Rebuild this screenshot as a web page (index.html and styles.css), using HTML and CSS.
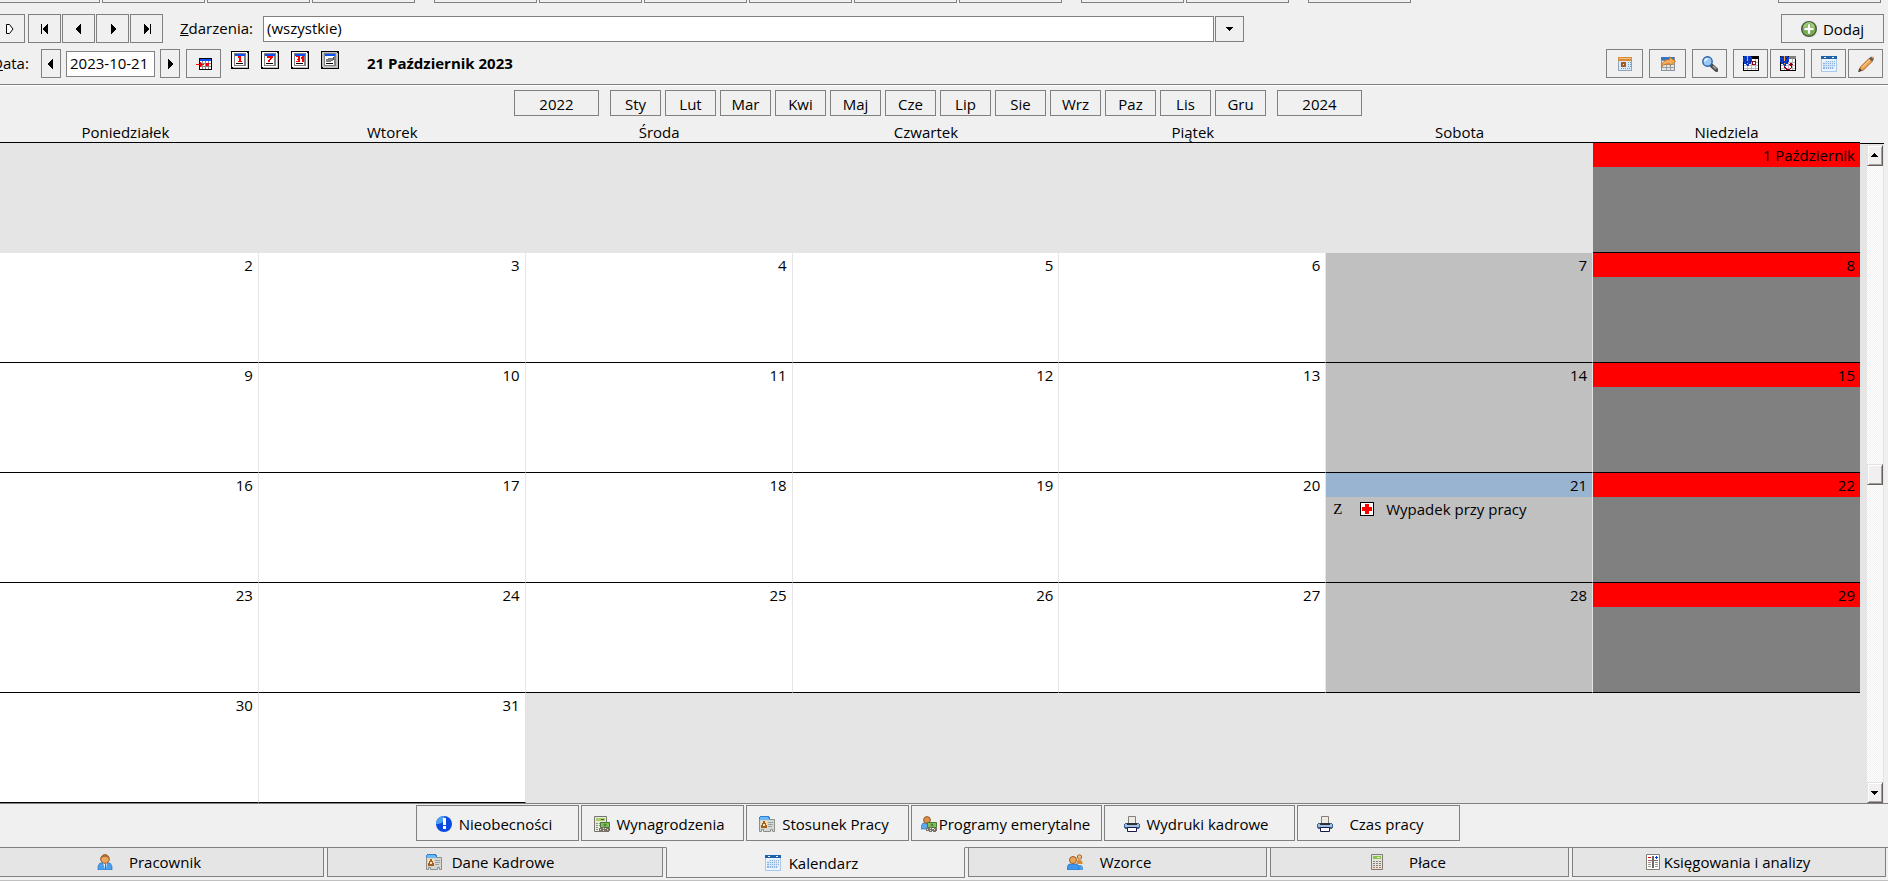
FILE: index.html
```
<!doctype html>
<html lang="pl">

<head>
  <meta charset="UTF-8">
  <meta name="viewport" content="width=device-width, initial-scale=1">
  <title>Kalendarz</title>
  <link rel="stylesheet" href="styles.css">
</head>

<body>
  <svg class="sprite" aria-hidden="true">
    <symbol id="left" viewBox="0 0 16 16"><path d="M10 3v10h-1v-1h-1v-1h-1v-1h-1v-1h-1v-2h1v-1h1v-1h1v-1h1v-1z" /></symbol>
    <symbol id="right" viewBox="0 0 16 16"><path d="M6 3v10h1v-1h1v-1h1v-1h1v-1h1v-2h-1v-1h-1v-1h-1v-1h-1v-1z" /></symbol>
    <symbol id="first" viewBox="0 0 16 16"><path d="M4 3h1v10h-1zM11 3v10h-1v-1h-1v-1h-1v-1h-1v-1h-1v-2h1v-1h1v-1h1v-1h1v-1z" /></symbol>
    <symbol id="last" viewBox="0 0 16 16"><path d="M11 3h1v10h-1zM5 3v10h1v-1h1v-1h1v-1h1v-1h1v-2h-1v-1h-1v-1h-1v-1h-1v-1z" /></symbol>
    <symbol id="run" viewBox="0 0 16 16"><path d="M5.500 3.500h3l3.500 4.500-3.500 4.500h-3z" fill="#fff" stroke="#000" /></symbol>
    <symbol id="down" viewBox="0 0 16 16"><path d="M4 6h7v1h-1v1h-1v1h-1v1h-1v-1h-1v-1h-1v-1h-1z" /></symbol>
    <symbol id="up" viewBox="0 0 16 16"><path d="M4 9h7v-1h-1v-1h-1v-1h-1v-1h-1v1h-1v1h-1v1h-1z" /></symbol>

    <symbol id="today" viewBox="0 0 16 16">
      <path d="M3 2h13v12H3z" />
      <path d="M4 3h11v2H4z" fill="#0a50f0" />
      <path d="M4 5h11v8H4z" fill="#fff" />
      <path d="M6 5h1v8H6zM9 5h1v8H9zM12 5h1v8h-1zM4 7h11v1H4zM4 10h11v1H4z" fill="#888" />
      <path d="M0 8h4V6h1v1h1v1h2v1H6v1H5v1H4V9H0zM10 7h3v3h-3z" fill="#f00" />
    </symbol>
    <symbol id="page" viewBox="0 0 18 18">
      <path d="M0 0h18v18H0z" />
      <path d="M1 1h15v15H1z" fill="#fff" />
      <path d="M16 2v14H2v1h15V2z" fill="#c0c0c0" />
      <path d="M3 2h12v13H3z" fill="#808080" />
      <path d="M4 5h9v9H4z" fill="#fff" />
      <path d="M4 3h10v2H4z" fill="#0a50f0" />
      <path d="M5 12h7v1H5z" />
    </symbol>
    <symbol id="day" viewBox="0 0 18 18"><use href="#page" /><path d="M7 5h3v5h1v1H7v-1h1V7H7z" fill="#f00" /></symbol>
    <symbol id="week" viewBox="0 0 18 18"><use href="#page" /><path d="M6 5h6v2h-1v1h-1v1H9v2H7V9h1V8h1V7H6z" fill="#f00" /></symbol>
    <symbol id="month" viewBox="0 0 18 18"><use href="#page" /><path d="M5 5h4v6H5v-1h2V9H6V8h1V6H5zM10 6h1V5h2v6h-2V8h-1z" fill="#f00" /></symbol>
    <symbol id="schedule" viewBox="0 0 18 18">
      <use href="#page" />
      <path d="M1 1h2v15H1zM3 1h13v1H3zM15 2h1v14H3v-1h12z" fill="#c0c0c0" />
      <path d="M7 7h5v3h-2v1H5V8h2z" fill="#808080" /><path d="M12 6h1v3h-1z" fill="#f00" />
    </symbol>

    <symbol id="plus" viewBox="0 0 16 16">
      <circle cx="8" cy="8" r="7.300" fill="#74b04a" stroke="#4a5548" stroke-width="1.400" />
      <path d="M2 7a6 6 0 0 1 12 0z" fill="#9ccb72" />
      <path d="M6.500 3h3v3.500H13v3H9.500V13h-3V9.500H3v-3h3.500z" fill="#fff" stroke="#5c8d38" stroke-width=".5" />
    </symbol>
    <symbol id="agenda" viewBox="0 0 16 16">
      <path d="M1 1h14v14H1z" fill="#d9eaf8" />
      <path d="M1 1h14v4H1z" fill="#d98b3c" />
      <path d="M2 2h12v1H2z" fill="#f4c184" />
      <path d="M1.500 5v9.500h13V5" fill="none" stroke="#8ea4b8" />
      <path d="M4 6h5v5H4z" fill="#a65a1c" /><path d="M6 8h1v1H6z" fill="#fff" />
      <path d="M11 6h1v1h-1zM13 6h1v1h-1zM11 8h1v1h-1zM13 8h1v1h-1zM11 10h1v1h-1zM13 10h1v1h-1zM4 12h1v1H4zM6 12h1v1H6zM8 12h1v1H8zM10 12h1v1h-1zM12 12h1v1h-1z" fill="#7a9ab8" />
    </symbol>
    <symbol id="export" viewBox="0 0 16 16">
      <path d="M1 1h14v14H1z" fill="#8c9298" />
      <path d="M1 1h13v3H1z" fill="#3278c8" />
      <path d="M2 5h12v9H2z" fill="#e4e6e8" />
      <path d="M2 8h12v1H2zM2 11h12v1H2zM6 5h1v9H6zM10 5h1v9h-1z" fill="#9a9da0" />
      <path d="M1.500 11C2 6 5 3.500 9.500 3.500V.8l6 4.700-5.500 4V7.800C6 7.500 4 8.500 1.500 11z" fill="#f5ad55" stroke="#b8681c" stroke-width=".8" />
    </symbol>
    <symbol id="search" viewBox="0 0 16 16">
      <path d="M9.500 9.500l5 4.500" stroke="#4e4e4e" stroke-width="4" stroke-linecap="round" />
      <path d="M11 10l3 3" stroke="#a8a8a8" stroke-width="1.500" />
      <circle cx="5.500" cy="5.500" r="4.700" fill="#9cc9f4" stroke="#2a62b0" stroke-width="1.400" />
      <path d="M2.500 6a3 3 0 0 1 4-3.500z" fill="#fff" />
    </symbol>
    <symbol id="gridbase" viewBox="0 0 16 16">
      <path d="M0 0h16v15H0z" />
      <path d="M1 3h14v11H1z" fill="#fff" />
      <path d="M4 3h1v11H4zM8 3h1v11H8zM12 3h1v11h-1zM1 6h14v1H1zM1 9h14v1H1zM1 12h14v1H1z" fill="#bbb" />
      <path d="M1 0h7v1h1v5H8v2H6v2H4V9H3V8H1V6H0V1h1z" fill="#0a3cc8" />
      <path d="M2 1h1v1H2zM6 2h1v1H6zM1 4h1v1H1zM7 5h1v1H7zM3 6h1v1H3z" fill="#001a70" />
      <path d="M4 0h1v5H4zM4 7h1v1H4z" fill="#ffa83c" />
    </symbol>
    <symbol id="gridone" viewBox="0 0 16 16"><use href="#gridbase" /><path d="M9.500 5.500h3v3h-3z" fill="#fff" stroke="#a00010" /></symbol>
    <symbol id="gridcycle" viewBox="0 0 16 16"><use href="#gridbase" /><path d="M9 0h7v3H9z" fill="#808080" /><path d="M4 10h1v1h1v1h1v1h3v-1h1v-2h-1V9H9V8h1V7h2v1h1v1h-1v3h-1v1h-1v1H6v-1H5v-1H4z" fill="#90001c" /></symbol>
    <symbol id="calendar" viewBox="0 0 16 16">
      <path d="M0 0h16v16H0z" fill="#a9c8ea" />
      <path d="M1 3h14v12H1z" fill="#eaf5fd" />
      <path d="M0 0h16v3H0z" fill="#1c62ac" /><path d="M3 1h2v1H3zM11 1h2v1h-2z" fill="#fff" />
      <path d="M5 5h9v5h-2v3H2V7h3z" fill="#8db2e0" />
      <path d="M4 5h1v8H4zM6 5h1v8H6zM8 5h1v8H8zM10 5h1v8h-1zM12 5h1v8h-1zM2 6h12v1H2zM2 8h12v1H2zM2 10h12v1H2z" fill="#d5e6f7" />
    </symbol>
    <symbol id="pencil" viewBox="0 0 16 16">
      <path d="M1 15.500L2.500 11 11.500 2l3 3L5.500 14z" fill="#f0a550" stroke="#a8662a" />
      <path d="M4 11.500l8-8" stroke="#ffd79a" />
      <path d="M11 2.500l2-2 3 3-2 2z" fill="#5a5f60" /><path d="M13 .5l3 3 0-2.500z" fill="#f49030" />
      <path d="M0 16l1.500-4 2.500 2.500z" fill="#444" />
    </symbol>

    <symbol id="alert" viewBox="0 0 16 16">
      <circle cx="8" cy="8" r="8" fill="#0c49e2" />
      <path d="M0 8a8 8 0 0 1 8-8c2 3-2 9-8 8z" fill="#4da0f2" />
      <path d="M7 2h3v7H7zM7 10h3v3H7z" fill="#fff" />
    </symbol>
    <symbol id="cash" viewBox="0 0 16 16">
      <path d="M6.500 6.500h9v5h-9z" fill="#84bd60" stroke="#477a32" />
      <circle cx="11" cy="9" r="1.500" fill="#4e8539" />
      <path d="M5 12h3v-1h3v2h2v-1h3v3h-1v1h-3v-1h-1v1H8v-1H5z" fill="#77716a" />
      <path d="M6 13h1v1H6zM9 12h1v1H9zM9 14h1v1H9zM13 13h1v1h-1z" fill="#e8e4de" />
    </symbol>
    <symbol id="wages" viewBox="0 0 16 16">
      <path d="M.5.500h12v15H.5z" fill="#eceae0" stroke="#74776c" />
      <path d="M2 2h9v3H2z" fill="#a8cc70" /><path d="M7 3h3v1H7z" fill="#44672c" />
      <path d="M2 7h2v1H2zM5 7h2v1H5zM2 9h2v1H2zM5 9h2v1H5zM2 11h2v1H2zM2 13h2v1H2z" fill="#8c8f86" />
      <use href="#cash" />
    </symbol>
    <symbol id="badge" viewBox="0 0 16 16">
      <path d="M0 1h1V0h9v1h1v4H0z" fill="#2a80d8" /><path d="M1 1h8v1h1v2H1z" fill="#6fb8f6" />
      <path d="M.5 3.500h15v12h-2v-2h-2v2h-7v-2h-2v2h-2z" fill="#d5d7d4" stroke="#8b8f8c" />
      <path d="M1 3h9v1H1z" fill="#6fb8f6" />
      <path d="M2 5h6v7H2z" fill="#f8dfb4" />
      <path d="M4 5h2v2h1v2h1v3H2V9h1V7h1z" fill="#a4601c" /><path d="M4 8h2v2H4z" fill="#f8dfb4" />
      <path d="M9 6h5v1H9zM9 8h5v1H9zM9 10h4v1H9z" fill="#9da19d" />
    </symbol>
    <symbol id="person" viewBox="0 0 16 16">
      <path d="M1 16v-4l2-3h10l2 3v4z" fill="#4aa0ee" stroke="#1d68b4" stroke-width=".6" />
      <path d="M6 9h4l-1 6H8z" fill="#e8f2fb" /><path d="M8 10h1v5H8z" fill="#666" />
      <circle cx="8" cy="5" r="4.300" fill="#e9a860" stroke="#93572a" />
      <path d="M4 5c0-6 8-6 8 0-2-3-6-3-8 0z" fill="#a86e36" />
    </symbol>
    <symbol id="pension" viewBox="0 0 16 16">
      <path d="M0 13v-3l2-3h7v6z" fill="#5aaaf0" stroke="#1d68b4" stroke-width=".6" />
      <circle cx="6" cy="4" r="3.400" fill="#d8934e" stroke="#96582a" /><use href="#cash" />
    </symbol>
    <symbol id="people" viewBox="0 0 16 16">
      <circle cx="12.500" cy="3" r="2.200" fill="#f0bf80" stroke="#a6662c" /><path d="M10 10V7l1-1h3l1.500 2v2z" fill="#d88c34" />
      <path d="M9 16v-3l1-2h4l2 2v3z" fill="#4f9fe8" />
      <path d="M0 16v-3l2-3h8l2 3v3z" fill="#3f97ec" stroke="#1d68b4" stroke-width=".6" />
      <circle cx="6" cy="6" r="3.500" fill="#eda555" stroke="#9c5c25" />
    </symbol>
    <symbol id="printer" viewBox="0 0 16 16">
      <path d="M4.500.500h7v7h-7z" fill="#eceae2" stroke="#838078" />
      <path d="M1 7h14v1h1v4h-1v1H1v-1H0V8h1z" fill="#39628f" />
      <path d="M1 8h14v3H1z" fill="#9dbfe4" /><path d="M3 7h10v2H3z" fill="#303238" />
      <path d="M3.500 11.500h9v4h-9z" fill="#fff" stroke="#1a184a" />
    </symbol>
    <symbol id="calc" viewBox="0 0 16 16">
      <path d="M2.500.500h11v15h-11z" fill="#e6e4de" stroke="#7f7b73" />
      <path d="M4 2h8v3H4z" fill="#8bc24c" /><path d="M8 3h3v1H8z" fill="#dff0c0" />
      <path d="M4 7h2v1H4zM7 7h2v1H7zM10 7h2v1h-2zM4 9h2v1H4zM7 9h2v1H7zM10 9h2v1h-2zM4 11h2v1H4zM7 11h2v1H7zM10 11h2v1h-2z" fill="#85827c" />
      <path d="M4 13h2v1H4zM7 13h2v1H7zM10 13h2v1h-2z" fill="#c8743c" />
    </symbol>
    <symbol id="ledger" viewBox="0 0 16 16">
      <path d="M1.500.500h13v15h-13z" fill="#fff" stroke="#847d76" />
      <path d="M7 2h2v12H7z" fill="#6c6661" /><path d="M3 6h10v1H3z" fill="#8a6a62" />
      <path d="M3 8h3v1H3zM10 8h3v1h-3zM3 10h3v1H3zM10 10h3v1h-3zM3 12h3v1H3zM10 12h3v1h-3z" fill="#9a9a92" />
      <path d="M3 3h3v1H3z" fill="#e00000" /><path d="M11 2h1v1h1v1h-1v1h-1V4h-1V3h1z" fill="#0038e0" />
    </symbol>
    <symbol id="cross" viewBox="0 0 14 14"><path d="M0 0h14v14H0z" /><path d="M1 1h12v12H1z" fill="#fff" /><path d="M5 2h4v3h3v4H9v3H5V9H2V5h3z" fill="#f00" /></symbol>
  </svg>

  <div class="strip" aria-hidden="true">
    <span class="stub"></span><span class="stub"></span><span class="stub"></span><span class="stub"></span>
    <span class="stub stub-gap"></span><span class="stub"></span><span class="stub"></span><span class="stub"></span><span class="stub"></span><span class="stub"></span>
    <span class="stub stub-gap"></span><span class="stub"></span>
    <span class="stub stub-gap"></span>
    <span class="stub stub-end"></span>
  </div>

  <header class="toolbar">
    <div class="bar events">
      <div class="nav">
        <button class="btn nav-btn" aria-label="Uruchom"><svg class="icon"><use href="#run" /></svg></button>
        <button class="btn nav-btn" aria-label="Pierwszy"><svg class="icon crisp"><use href="#first" /></svg></button>
        <button class="btn nav-btn" aria-label="Poprzedni"><svg class="icon crisp"><use href="#left" /></svg></button>
        <button class="btn nav-btn" aria-label="Następny"><svg class="icon crisp"><use href="#right" /></svg></button>
        <button class="btn nav-btn" aria-label="Ostatni"><svg class="icon crisp"><use href="#last" /></svg></button>
      </div>
      <label class="events-label" for="events"><u>Z</u>darzenia:</label>
      <select class="field events-select" id="events">
        <option>(wszystkie)</option>
      </select>
      <span class="btn drop"><svg class="icon crisp"><use href="#down" /></svg></span>
      <button class="btn add"><svg class="icon"><use href="#plus" /></svg>Dodaj</button>
    </div>

    <div class="bar dates">
      <label class="date-label" for="date"><u>D</u>ata:</label>
      <button class="btn step" aria-label="Dzień wstecz"><svg class="icon crisp"><use href="#left" /></svg></button>
      <input class="field date" id="date" type="text" value="2023-10-21">
      <button class="btn step" aria-label="Dzień naprzód"><svg class="icon crisp"><use href="#right" /></svg></button>
      <button class="btn tool today" aria-label="Dzisiaj"><svg class="icon crisp"><use href="#today" /></svg></button>
      <div class="views">
        <button class="view" aria-label="Dzień"><svg class="view-icon crisp"><use href="#day" /></svg></button>
        <button class="view" aria-label="Tydzień"><svg class="view-icon crisp"><use href="#week" /></svg></button>
        <button class="view" aria-label="Miesiąc"><svg class="view-icon crisp"><use href="#month" /></svg></button>
        <button class="view" aria-label="Terminarz"><svg class="view-icon crisp"><use href="#schedule" /></svg></button>
      </div>
      <h1 class="title">21 Październik 2023</h1>
      <div class="tools">
        <button class="btn tool tool-wide" aria-label="Agenda"><svg class="icon crisp"><use href="#agenda" /></svg></button>
        <button class="btn tool tool-wide" aria-label="Eksport"><svg class="icon"><use href="#export" /></svg></button>
        <button class="btn tool" aria-label="Szukaj"><svg class="icon"><use href="#search" /></svg></button>
        <div class="pair">
          <button class="btn tool" aria-label="Zdarzenie"><svg class="icon crisp"><use href="#gridone" /></svg></button>
          <button class="btn tool" aria-label="Zdarzenie cykliczne"><svg class="icon crisp"><use href="#gridcycle" /></svg></button>
        </div>
        <div class="pair">
          <button class="btn tool" aria-label="Kalendarz"><svg class="icon crisp"><use href="#calendar" /></svg></button>
          <button class="btn tool" aria-label="Edytuj"><svg class="icon"><use href="#pencil" /></svg></button>
        </div>
      </div>
    </div>
  </header>

  <nav class="months">
    <button class="btn year">2022</button>
    <button class="btn month">Sty</button>
    <button class="btn month">Lut</button>
    <button class="btn month">Mar</button>
    <button class="btn month">Kwi</button>
    <button class="btn month">Maj</button>
    <button class="btn month">Cze</button>
    <button class="btn month">Lip</button>
    <button class="btn month">Sie</button>
    <button class="btn month">Wrz</button>
    <button class="btn month">Paz</button>
    <button class="btn month">Lis</button>
    <button class="btn month">Gru</button>
    <button class="btn year">2024</button>
  </nav>

  <main class="calendar">
    <table class="days">
      <thead>
        <tr>
          <th>Poniedziałek</th><th>Wtorek</th><th>Środa</th><th>Czwartek</th><th>Piątek</th><th>Sobota</th><th>Niedziela</th>
        </tr>
      </thead>
      <tbody>
        <tr>
          <td class="blank" colspan="6"></td>
          <td class="sun"><div class="num">1 Październik</div></td>
        </tr>
        <tr>
          <td><div class="num">2</div></td>
          <td><div class="num">3</div></td>
          <td><div class="num">4</div></td>
          <td><div class="num">5</div></td>
          <td><div class="num">6</div></td>
          <td class="sat"><div class="num">7</div></td>
          <td class="sun"><div class="num">8</div></td>
        </tr>
        <tr>
          <td><div class="num">9</div></td>
          <td><div class="num">10</div></td>
          <td><div class="num">11</div></td>
          <td><div class="num">12</div></td>
          <td><div class="num">13</div></td>
          <td class="sat"><div class="num">14</div></td>
          <td class="sun"><div class="num">15</div></td>
        </tr>
        <tr>
          <td><div class="num">16</div></td>
          <td><div class="num">17</div></td>
          <td><div class="num">18</div></td>
          <td><div class="num">19</div></td>
          <td><div class="num">20</div></td>
          <td class="sat selected">
            <div class="num">21</div>
            <div class="event"><span class="kind">Z</span><svg class="event-icon crisp"><use href="#cross" /></svg>Wypadek przy pracy</div>
          </td>
          <td class="sun"><div class="num">22</div></td>
        </tr>
        <tr>
          <td><div class="num">23</div></td>
          <td><div class="num">24</div></td>
          <td><div class="num">25</div></td>
          <td><div class="num">26</div></td>
          <td><div class="num">27</div></td>
          <td class="sat"><div class="num">28</div></td>
          <td class="sun"><div class="num">29</div></td>
        </tr>
        <tr>
          <td><div class="num">30</div></td>
          <td><div class="num">31</div></td>
          <td class="blank" colspan="5"></td>
        </tr>
      </tbody>
    </table>
    <div class="side">
      <div class="scroll">
        <button class="scroll-btn" aria-label="W górę"><svg class="icon crisp"><use href="#up" /></svg></button>
        <div class="track"></div>
        <div class="scroll-btn"></div>
        <div class="track"></div>
        <button class="scroll-btn" aria-label="W dół"><svg class="icon crisp"><use href="#down" /></svg></button>
      </div>
    </div>
  </main>

  <div class="actions">
    <button class="btn action roomy"><svg class="icon"><use href="#alert" /></svg><span class="text">Nieobecności</span></button>
    <button class="btn action"><svg class="icon"><use href="#wages" /></svg><span class="text">Wynagrodzenia</span></button>
    <button class="btn action"><svg class="icon"><use href="#badge" /></svg><span class="text">Stosunek Pracy</span></button>
    <button class="btn action long tight"><svg class="icon"><use href="#pension" /></svg><span class="text">Programy emerytalne</span></button>
    <button class="btn action long roomy"><svg class="icon"><use href="#printer" /></svg><span class="text">Wydruki kadrowe</span></button>
    <button class="btn action roomy"><svg class="icon"><use href="#printer" /></svg><span class="text">Czas pracy</span></button>
  </div>

  <nav class="tabs">
    <button class="tab tab-staff"><svg class="icon"><use href="#person" /></svg><span class="text">Pracownik</span></button>
    <button class="tab"><svg class="icon"><use href="#badge" /></svg><span class="text">Dane Kadrowe</span></button>
    <button class="tab active"><svg class="icon crisp"><use href="#calendar" /></svg><span class="text">Kalendarz</span></button>
    <button class="tab"><svg class="icon"><use href="#people" /></svg><span class="text">Wzorce</span></button>
    <button class="tab"><svg class="icon"><use href="#calc" /></svg><span class="text">Płace</span></button>
    <button class="tab tab-books"><svg class="icon"><use href="#ledger" /></svg><span class="text">Księgowania i analizy</span></button>
  </nav>
</body>

</html>
```
FILE: styles.css
```
* {
  box-sizing: border-box;
}

body {
  margin: 0;
  min-height: 100vh;
  overflow: hidden;
  display: flex;
  flex-direction: column;
  background: #f0f0f0;
  color: #000;
  font: 15px/20px "Open Sans", "Noto Sans", sans-serif;
}

button,
input,
select {
  font: inherit;
  color: inherit;
  border-radius: 0;
}

.sprite {
  position: absolute;
  width: 0;
  height: 0;
}

.icon {
  flex: none;
  width: 16px;
  height: 16px;
}

.crisp {
  shape-rendering: crispEdges;
}

.btn {
  display: flex;
  flex: none;
  align-items: center;
  justify-content: center;
  height: 29px;
  padding: 0;
  background: #f0f0f0;
  border: 1px solid #808080;
}

.field {
  height: 26px;
  padding: 0 3px 2px;
  background: #fff;
  border: 1px solid #808080;
  appearance: none;
}

/* lower edge of the button row that is scrolled off the top */
.strip {
  display: flex;
  gap: 2px;
  height: 3px;
  margin-left: -3px;
  padding-right: 7px;
}

.stub {
  flex: none;
  width: 103px;
  border: 1px solid #808080;
  border-top: 0;
}

.stub-gap {
  margin-left: 17px;
}

.stub-end {
  margin-left: auto;
}

.toolbar {
  padding-top: 11px;
  border-bottom: 1px solid #808080;
  box-shadow: 0 1px #fff;
}

.bar {
  display: flex;
  align-items: center;
  height: 29px;
}

.bar label,
.title {
  padding-bottom: 2px;
}

.events {
  margin-left: -8px;
  padding-right: 4px;
}

.nav {
  display: flex;
  gap: 1px;
}

.nav-btn {
  width: 33px;
}

.nav-btn:first-child {
  margin-right: 2px;
}

.events-label {
  flex: none;
  width: 83px;
  margin-left: 17px;
}

.events-select {
  flex: 0 1 951px;
  min-width: 0;
}

.drop {
  width: 29px;
  height: 26px;
  margin-left: 1px;
}

.add {
  width: 103px;
  gap: 6px;
  margin-left: auto;
}

.dates {
  margin: 6px 0;
  padding-right: 5px;
}

.date-label {
  flex: none;
  width: 49px;
  margin-left: -8px;
}

.step {
  width: 20px;
}

.date {
  width: 89px;
  margin: 0 5px;
}

.tool {
  width: 35px;
}

.tool-wide {
  width: 37px;
}

.today {
  margin-left: 6px;
}

.views {
  display: flex;
  gap: 12px;
  align-self: flex-start;
  margin: 2px 0 0 10px;
}

.view {
  display: flex;
  padding: 0;
  background: none;
  border: 0;
}

.view-icon {
  width: 18px;
  height: 18px;
}

.title {
  margin: 0 0 0 28px;
  font-size: 15px;
  line-height: 20px;
}

.tools {
  display: flex;
  gap: 6px;
  margin-left: auto;
}

.pair {
  display: flex;
  gap: 2px;
}

.months {
  display: flex;
  justify-content: center;
  gap: 4px;
  padding: 5px 12px 0 0;
}

.months .btn {
  height: 26px;
  padding-top: 2px;
}

.year {
  width: 85px;
}

.year:first-child {
  margin-right: 7px;
}

.year:last-child {
  margin-left: 7px;
}

.month {
  width: 51px;
}

.calendar {
  display: flex;
  padding-right: 4px;
  border-bottom: 1px solid #808080;
}

/* the first column starts outside the window */
.days {
  flex: 1;
  width: 100%;
  margin-left: -8px;
  table-layout: fixed;
  border-spacing: 0;
}

.days th {
  height: 27px;
  padding: 6px 0 0;
  font-weight: 400;
  border-bottom: 1px solid #000;
}

.days td {
  height: 110px;
  padding: 0;
  vertical-align: top;
  background: #fff;
  border-right: 1px solid #e5e5e5;
  border-bottom: 1px solid #000;
}

.days .blank {
  background: #e5e5e5;
  border: 0;
}

.days .sat {
  background: #c0c0c0;
}

.days .sun {
  background: #808080;
  border-right: 0;
}

.num {
  height: 24px;
  padding-right: 5px;
  line-height: 24px;
  text-align: right;
}

.sun .num {
  background: #f00;
}

.selected .num {
  background: #99b4d1;
}

.event {
  display: flex;
  align-items: center;
  height: 24px;
  padding-left: 7px;
}

.kind {
  width: 27px;
  font-family: "Liberation Serif", serif;
}

.event-icon {
  width: 14px;
  height: 14px;
  margin-right: 12px;
}

.side {
  display: flex;
  flex: none;
  flex-direction: column;
  width: 24px;
}

.side::before {
  content: "";
  height: 27px;
  border-bottom: 1px solid #000;
}

.scroll {
  flex: 1;
  display: flex;
  flex-direction: column;
  padding: 1px 1px 0 7px;
  background: #e5e5e5;
}

.scroll-btn {
  display: flex;
  align-items: center;
  justify-content: center;
  height: 21px;
  padding: 0;
  background: #f0f0f0;
  border: 1px solid;
  border-color: #e3e3e3 #69605c #69605c #e3e3e3;
  box-shadow: inset 1px 1px #fff, inset -1px -1px #a0a0a0;
}

.track {
  flex: 1;
  background: repeating-conic-gradient(#fff 0 25%, #f0f0f0 0 50%) 0 0 / 2px 2px;
}

.actions {
  display: flex;
  justify-content: center;
  gap: 2px;
  padding: 1px 12px 6px 0;
}

.action {
  width: 163px;
  height: 36px;
  padding: 2px 12px 0;
}

.long {
  width: 191px;
}

.roomy {
  padding: 2px 19px 0;
}

.tight {
  padding: 2px 9px 0;
}

.text {
  flex: 1;
  text-align: center;
  white-space: nowrap;
}

.tabs {
  display: grid;
  grid-template-columns: 334fr 336fr 299fr 299fr 299fr 314fr;
  gap: 3px;
  margin-left: -10px;
  padding-right: 2px;
  padding-bottom: 2px;
  background: linear-gradient(#808080, #808080) 0 0 / 100% 1px no-repeat;
  border-bottom: 1px solid #c0c0c0;
}

.tab {
  display: flex;
  align-items: center;
  min-width: 0;
  height: 30px;
  padding: 0 98px;
  background: #e5e5e5;
  border: 1px solid #808080;
}

.active {
  height: 31px;
  background: #f0f0f0;
  border-top-color: #f0f0f0;
}

.tab-staff {
  padding: 0 106px;
}

.tab-books {
  padding: 0 72px;
}
```
